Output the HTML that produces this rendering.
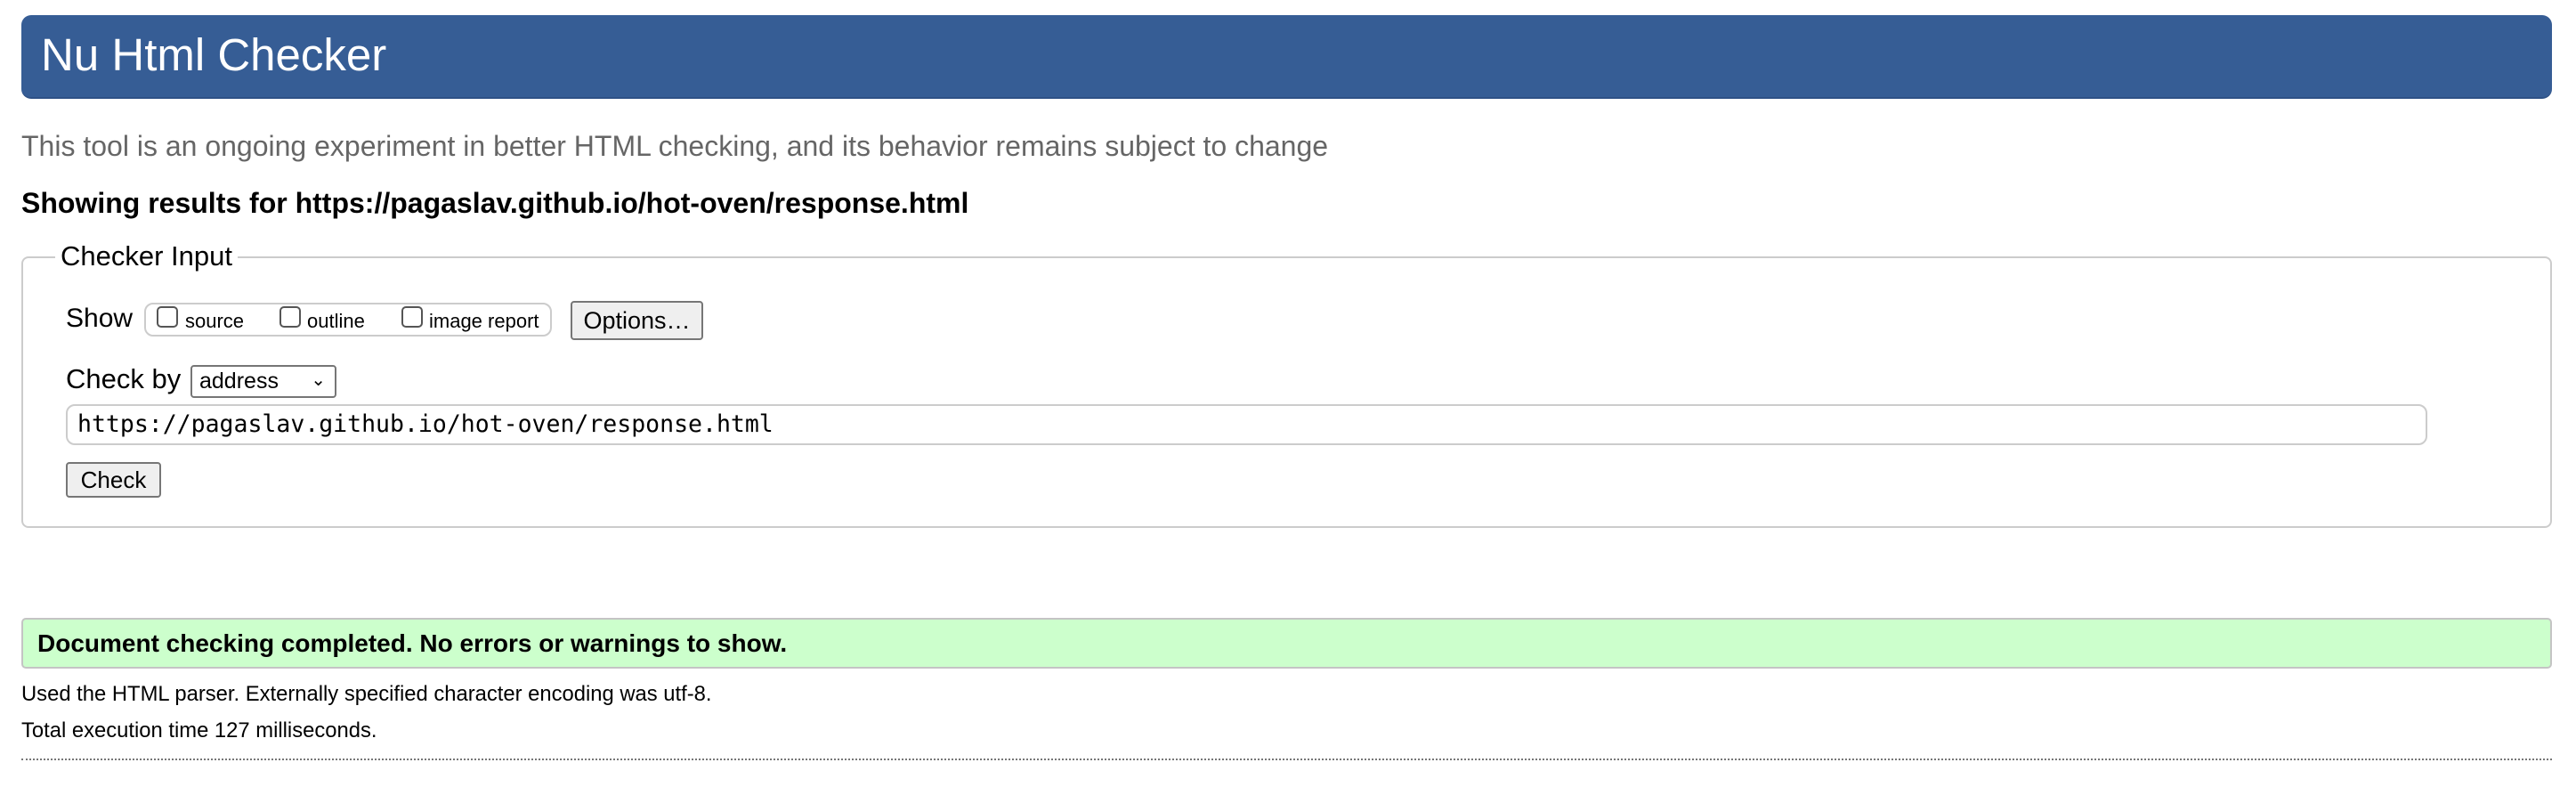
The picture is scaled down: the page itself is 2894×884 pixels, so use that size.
<!DOCTYPE html>
<html><head><meta charset="utf-8"><style>
*{box-sizing:border-box;margin:0;padding:0}
body{width:2894px;height:884px;background:#fff;position:relative;font-family:"Liberation Sans",Arial,sans-serif;color:#000;overflow:hidden}
.a{position:absolute;white-space:nowrap}
#hd{left:24px;top:17px;width:2843px;height:94px;background:#365d95;border-radius:11px;border-bottom:2px solid #2f5186}
#hd span{position:absolute;left:22px;top:16px;font-size:51px;color:#fff;line-height:58px}
.btn{background:#efefef;border:2px solid #767676;border-radius:4px}
</style></head><body>
<div id="hd" class="a"><span>Nu Html Checker</span></div>
<div class="a" style="left:24px;top:146px;font-size:32px;color:#666;line-height:36px">This tool is an ongoing experiment in better HTML checking, and its behavior remains subject to change</div>
<div class="a" style="left:24px;top:210px;font-size:32px;font-weight:bold;line-height:36px">Showing results for https://pagaslav.github.io/hot-oven/response.html</div>
<div class="a" style="left:24px;top:288px;width:2843px;height:305px;border:2px solid #ccc;border-radius:8px"></div>
<div class="a" style="left:62px;top:270px;background:#fff;padding:0 6px;font-size:31px;line-height:36px">Checker Input</div>
<div class="a" style="left:74px;top:340px;font-size:30px;line-height:36px">Show</div>
<div class="a" style="left:162px;top:340px;width:458px;height:38px;border:2px solid #ccc;border-radius:10px"></div>
<div class="a" style="left:176px;top:344px;width:24px;height:24px;border:2px solid #555;border-radius:5px"></div>
<div class="a" style="left:208px;top:348px;font-size:22px">source</div>
<div class="a" style="left:314px;top:344px;width:24px;height:24px;border:2px solid #555;border-radius:5px"></div>
<div class="a" style="left:345px;top:348px;font-size:22px">outline</div>
<div class="a" style="left:451px;top:344px;width:24px;height:24px;border:2px solid #555;border-radius:5px"></div>
<div class="a" style="left:482px;top:348px;font-size:22px">image report</div>
<div class="a btn" style="left:641px;top:338px;width:149px;height:44px;font-size:27px;text-align:center;line-height:40px">Options…</div>
<div class="a" style="left:74px;top:408px;font-size:31px;line-height:36px">Check by</div>
<div class="a" style="left:214px;top:410px;width:164px;height:37px;border:2px solid #767676;border-radius:4px;font-size:25px;line-height:33px;padding-left:8px">address<span style="position:absolute;right:10px;top:-1px;font-size:20px">&#8964;</span></div>
<div class="a" style="left:74px;top:454px;width:2653px;height:46px;border:2px solid #ccc;border-radius:10px;font-family:'DejaVu Sans Mono','Liberation Mono',monospace;font-size:26.5px;line-height:42px;padding-left:11px">https://pagaslav.github.io/hot-oven/response.html</div>
<div class="a btn" style="left:74px;top:519px;width:107px;height:40px;font-size:26px;text-align:center;line-height:36px">Check</div>
<div class="a" style="left:24px;top:694px;width:2843px;height:57px;background:#ccffcc;border:2px solid #c4c4c4;border-radius:5px;font-size:28px;font-weight:bold;line-height:53px;padding-left:16px">Document checking completed. No errors or warnings to show.</div>
<div class="a" style="left:24px;top:767px;font-size:23.8px;line-height:26px">Used the HTML parser. Externally specified character encoding was utf-8.</div>
<div class="a" style="left:24px;top:808px;font-size:23.8px;line-height:26px">Total execution time 127 milliseconds.</div>
<div class="a" style="left:24px;top:852px;width:2843px;border-top:2px dotted #777"></div>
</body></html>
